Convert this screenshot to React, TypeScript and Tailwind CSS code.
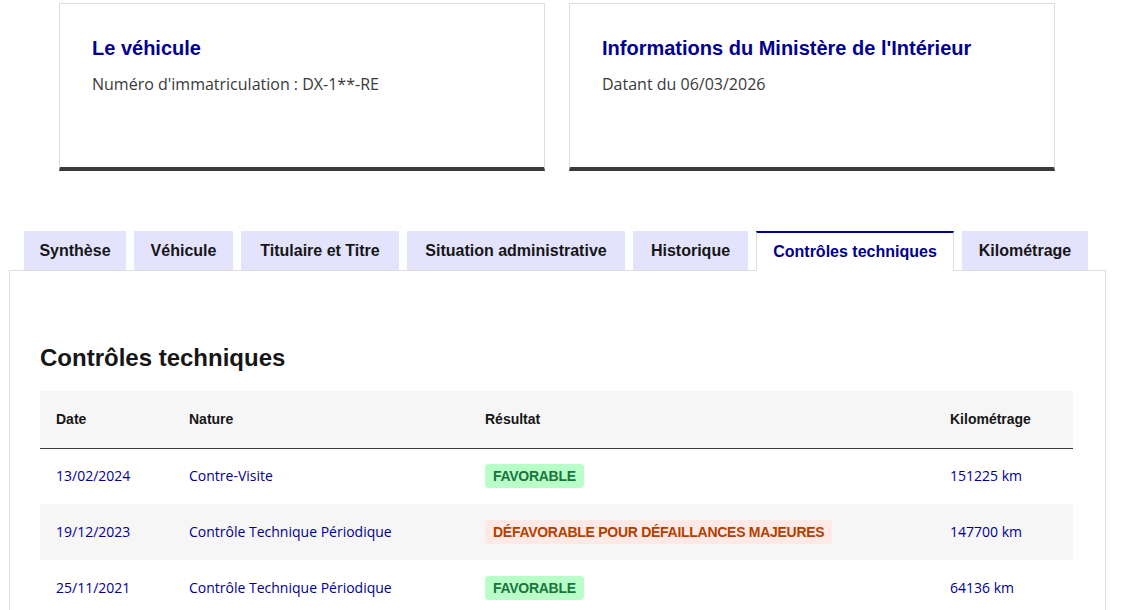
import React from 'react';

interface Controle {
  date: string;
  nature: string;
  resultat: 'favorable' | 'defavorable';
  label: string;
  km: string;
}

const controles: Controle[] = [
  { date: '13/02/2024', nature: 'Contre-Visite', resultat: 'favorable', label: 'Favorable', km: '151225 km' },
  {
    date: '19/12/2023',
    nature: 'Contrôle Technique Périodique',
    resultat: 'defavorable',
    label: 'Défavorable pour défaillances majeures',
    km: '147700 km'
  },
  { date: '25/11/2021', nature: 'Contrôle Technique Périodique', resultat: 'favorable', label: 'Favorable', km: '64136 km' }
];

// libellé + largeur fixe de chaque onglet
const tabs = [
  { label: 'Synthèse', w: 'w-[102px]' },
  { label: 'Véhicule', w: 'w-[99px]' },
  { label: 'Titulaire et Titre', w: 'w-[158px]' },
  { label: 'Situation administrative', w: 'w-[218px]' },
  { label: 'Historique', w: 'w-[115px]' },
  { label: 'Contrôles techniques', w: 'w-[198px]' },
  { label: 'Kilométrage', w: 'w-[126px]' }
];

const ACTIVE_TAB = 'Contrôles techniques';

const InfoCard: React.FC<{ title: string; children: React.ReactNode }> = ({ title, children }) => (
  <div className="w-[486px] h-[168px] border border-[#dddddd] border-b-4 border-b-[#3a3a3a] px-8 pt-[30px] bg-white">
    <h3 className="text-[20px] leading-7 font-bold text-[#000091]">{title}</h3>
    <p className="mt-2.5 text-base leading-6 text-[#3a3a3a] font-['Open_Sans',Arial,sans-serif]">{children}</p>
  </div>
);

const Badge: React.FC<{ type: Controle['resultat']; children: React.ReactNode }> = ({ type, children }) => (
  <span
    className={
      type === 'favorable'
        ? 'inline-flex items-center h-6 px-2 rounded text-sm font-bold uppercase tracking-[-0.02em] bg-[#b8fec9] text-[#18753c]'
        : 'inline-flex items-center h-6 px-2 rounded text-sm font-bold uppercase tracking-[-0.02em] bg-[#ffe9e6] text-[#b34000]'
    }
  >
    {children}
  </span>
);

export default function App() {
  return (
    <div className="w-[1122px] h-[610px] overflow-hidden bg-white text-[#161616] font-['Liberation_Sans',Arial,sans-serif]">
      {/* Cartes d'en-tête */}
      <div className="flex gap-6 ml-[59px] mt-[3px]">
        <InfoCard title="Le véhicule">Numéro d'immatriculation : DX-1**-RE</InfoCard>
        <InfoCard title="Informations du Ministère de l'Intérieur">Datant du 06/03/2026</InfoCard>
      </div>

      {/* Onglets */}
      <div className="ml-[9px] w-[1097px] mt-[60px]">
        <ul className="flex items-end gap-2 pl-[15px] relative z-10">
          {tabs.map((tab) =>
            tab.label === ACTIVE_TAB ? (
              <li
                key={tab.label}
                className={`${tab.w} h-[40px] -mb-px flex items-center justify-center bg-white border-x border-[#dddddd] border-t-2 border-t-[#000091] text-base font-bold text-[#000091]`}
              >
                {tab.label}
              </li>
            ) : (
              <li
                key={tab.label}
                className={`${tab.w} h-[39px] flex items-center justify-center bg-[#e3e3fd] text-base font-bold text-[#161616]`}
              >
                {tab.label}
              </li>
            )
          )}
        </ul>

        <div className="border border-[#dddddd] pl-[30px] pr-[32px] pt-[71px] pb-8">
          <h2 className="text-2xl leading-8 font-bold text-[#161616] mb-[17px]">Contrôles techniques</h2>

          <table className="w-full table-fixed border-collapse text-sm">
            <colgroup>
              <col className="w-[133px]" />
              <col className="w-[296px]" />
              <col className="w-[465px]" />
              <col />
            </colgroup>
            <thead>
              <tr className="bg-[#f6f6f6] h-[57px] border-b border-[#3a3a3a]">
                <th className="px-4 text-left font-bold">Date</th>
                <th className="px-4 text-left font-bold">Nature</th>
                <th className="px-4 text-left font-bold">Résultat</th>
                <th className="px-4 text-left font-bold">Kilométrage</th>
              </tr>
            </thead>
            <tbody className="font-['Open_Sans',Arial,sans-serif]">
              {controles.map((c, i) => (
                <tr key={c.date} className={i % 2 === 1 ? 'h-14 bg-[#f6f6f6]' : 'h-14 bg-white'}>
                  <td className="px-4 text-[#000091]">{c.date}</td>
                  <td className="px-4 text-[#000091]">{c.nature}</td>
                  <td className="px-4 font-['Liberation_Sans',Arial,sans-serif]">
                    <Badge type={c.resultat}>{c.label}</Badge>
                  </td>
                  <td className="px-4 text-[#000091]">{c.km}</td>
                </tr>
              ))}
            </tbody>
          </table>
        </div>
      </div>
    </div>
  );
}
